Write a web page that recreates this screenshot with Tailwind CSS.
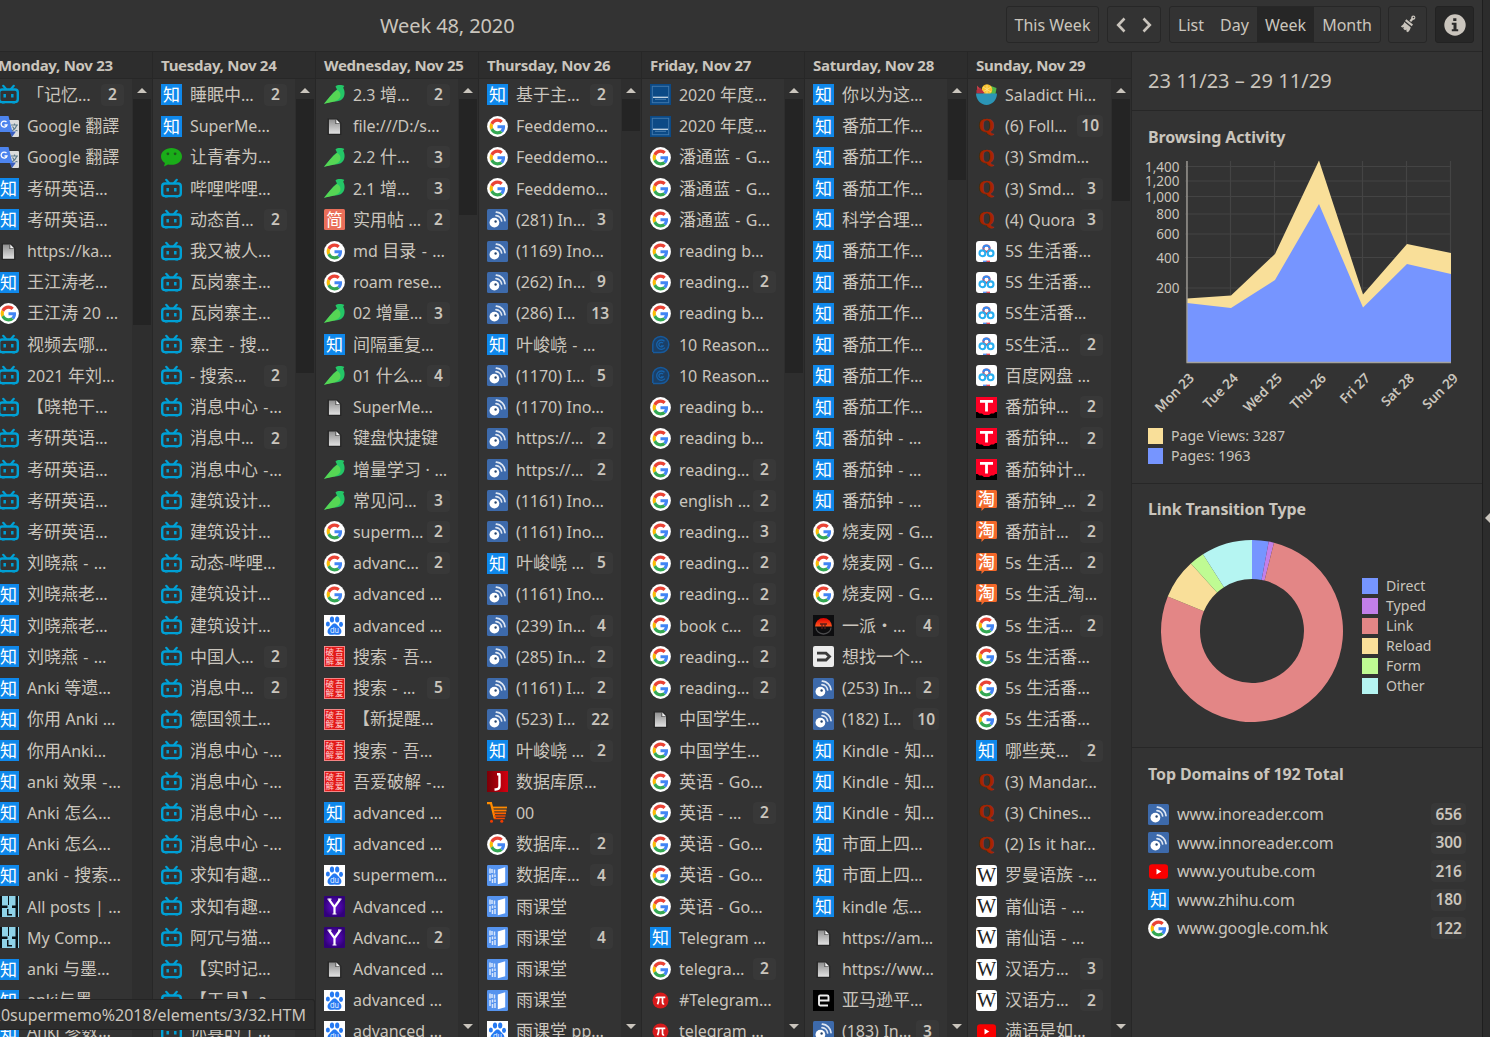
<!DOCTYPE html>
<html lang="en">
<head>
<meta charset="utf-8">
<title>History</title>
<script src="https://cdn.jsdelivr.net/npm/@tailwindcss/browser@4"></script>
</head>
<body class="h-[1037px] w-[1490px] overflow-hidden bg-[#333333] font-['Noto_Sans','Noto_Sans_CJK_SC',sans-serif] text-[16px] text-[#cac5bd]">
<svg class="absolute h-0 w-0" aria-hidden="true">
  <defs>
    <linearGradient id="gPage" x1="0" y1="0" x2="0" y2="1"><stop offset="0" stop-color="#8c8c8c"/><stop offset="1" stop-color="#e4e4e4"/></linearGradient>
    <linearGradient id="gJ" x1="0" y1="0" x2="1" y2="0"><stop offset="0" stop-color="#7a0008"/><stop offset="1" stop-color="#d4000f"/></linearGradient>
    <radialGradient id="gY"><stop offset="0" stop-color="#6a10d8"/><stop offset="1" stop-color="#32007c"/></radialGradient>
    <linearGradient id="gPai" x1="0" y1="0" x2="0" y2="1"><stop offset="0" stop-color="#e00000"/><stop offset="1" stop-color="#ff5a20"/></linearGradient>
  </defs>
  <symbol id="bili" viewBox="0 0 21 21"><rect x="1.2" y="5.500" width="18.600" height="12.600" rx="2.800" fill="none" stroke="#00a1d6" stroke-width="2.400"/><path d="M5.200 1.800 8 5M15.800 1.800 13 5" stroke="#00a1d6" stroke-width="2.200" stroke-linecap="round"/><path d="M6.700 10v3.600M14.300 10v3.600" stroke="#00a1d6" stroke-width="2.500"/><path d="M4 19.300h2.600M14.400 19.300H17" stroke="#0585b0" stroke-width="1"/></symbol>
  <symbol id="zhi" viewBox="0 0 21 21"><rect width="21" height="21" fill="#0f88eb"/><text x="10.500" y="16.500" text-anchor="middle" font-size="17" fill="#fff" font-weight="400" font-family="'Noto Sans CJK SC'">知</text></symbol>
  <symbol id="google" viewBox="0 0 21 21"><circle cx="10.500" cy="10.500" r="10.400" fill="#fff"/><g transform="translate(2.600 2.600) scale(.329)"><path fill="#EA4335" d="M24 9.500c3.540 0 6.710 1.220 9.210 3.600l6.850-6.850C35.900 2.380 30.470 0 24 0 14.620 0 6.510 5.380 2.560 13.220l7.980 6.190C12.430 13.720 17.740 9.500 24 9.500z"/><path fill="#4285F4" d="M46.980 24.550c0-1.570-.15-3.090-.38-4.550H24v9.020h12.940c-.58 2.960-2.260 5.480-4.780 7.180l7.730 6c4.510-4.180 7.090-10.360 7.090-17.650z"/><path fill="#FBBC05" d="M10.530 28.590c-.48-1.450-.76-2.990-.76-4.590s.27-3.140.76-4.590l-7.980-6.190C.92 16.460 0 20.120 0 24c0 3.880.92 7.540 2.560 10.780l7.970-6.190z"/><path fill="#34A853" d="M24 48c6.480 0 11.930-2.130 15.890-5.810l-7.730-6c-2.150 1.450-4.920 2.300-8.160 2.300-6.260 0-11.570-4.220-13.470-9.910l-7.980 6.190C6.510 42.620 14.620 48 24 48z"/></g></symbol>
  <symbol id="gtrans" viewBox="0 0 21 21"><path d="M9 4h11a1 1 0 0 1 1 1v15a1 1 0 0 1-1 1h-6z" fill="#dcdcdc"/><path d="M11.500 15.500 14 21l4-5.500z" fill="#3a5fc0"/><path d="M13 9h7M16.500 7.500V9M19 9q-1.500 4-5 6M14.500 10.500q1.500 3 5 4.500" stroke="#607d8b" stroke-width="1.200" fill="none"/><path d="M0 0h10.500l4 16H1a1 1 0 0 1-1-1z" fill="#4d84ee"/><path d="M8.500 6.200A3 3 0 1 0 9 9H6.500" fill="none" stroke="#fff" stroke-width="1.300"/></symbol>
  <symbol id="page" viewBox="0 0 21 21"><path d="M4.300 2.800h8.200l4.200 4.200v11.300H4.300z" fill="url(#gPage)" stroke="#242424" stroke-width="1.200"/><path d="M11.300 3v5h5z" fill="#555"/><path d="M12.300 3.600v3.600h3.600z" fill="#f2f2f2"/></symbol>
  <symbol id="wechat" viewBox="0 0 21 21"><path d="M10.500 1C4.700 1 0 4.600 0 9.500c0 2.900 1.600 5 3.900 6.600L3 19.500l4-2.100c1.100.3 2.300.4 3.500.4 5.800 0 10.500-3.600 10.500-8.300S16.300 1 10.500 1z" fill="#1aad19"/><circle cx="6.900" cy="6.800" r="1.400" fill="#1d5b1c"/><circle cx="14.100" cy="6.800" r="1.400" fill="#1d5b1c"/></symbol>
  <symbol id="yuque" viewBox="0 0 21 21"><path d="M11.500 2.500C13 .6 18 .7 20.300 2L19.200 3.800c1.800 3 2.200 8-1 11.200-3.800 3.800-9 1-18.200 4.800C3 16.500 8 9 13 5.500z" fill="#24c667"/><path d="M13 6c2.500 1 4.500 4 3 7.500-3.500 5-9 4.500-16 6.300C3.500 16 8 9.500 13 6z" fill="#56d654"/></symbol>
  <symbol id="jian" viewBox="0 0 21 21"><rect width="21" height="21" rx="1.500" fill="#ea6f5a"/><text x="10.500" y="16.500" text-anchor="middle" font-size="16.500" fill="#fff" font-weight="400" font-family="'Noto Sans CJK SC'">简</text></symbol>
  <symbol id="ino" viewBox="0 0 21 21"><rect width="21" height="21" rx="1.500" fill="#3d6aab"/><circle cx="7.400" cy="13.600" r="4.900" fill="#fff"/><circle cx="8.600" cy="12.500" r="1.200" fill="#27466f"/><path d="M9 6.600A6 6 0 0 1 14.600 12M9.400 3.200A9.200 9.200 0 0 1 18 11.600" fill="none" stroke="#dfe7f2" stroke-width="1.700" stroke-linecap="round"/></symbol>
  <symbol id="baidu" viewBox="0 0 21 21"><rect width="21" height="21" fill="#fff"/><g fill="#2579f2"><ellipse cx="3.900" cy="9" rx="2" ry="2.600"/><ellipse cx="8" cy="4.500" rx="2.100" ry="2.900"/><ellipse cx="13.200" cy="4.500" rx="2.100" ry="2.900"/><ellipse cx="17" cy="9.300" rx="2" ry="2.600"/><path d="M10.500 8.600c2.400 0 3.200 2.600 5.200 4.200 2.600 2.200 2.300 6.700-1.200 6.900-1.500.1-2.600-.3-4-.3s-2.500.4-4 .3c-3.500-.2-3.800-4.700-1.200-6.900 2-1.600 2.800-4.200 5.200-4.200z"/></g><text x="10.500" y="18" text-anchor="middle" font-size="7.500" fill="#e6f0ff" font-weight="400" font-family="Inter">du</text></symbol>
  <symbol id="wuai" viewBox="0 0 21 21"><rect width="21" height="21" fill="#e21a1a"/><rect x=".5" y=".5" width="20" height="20" fill="none" stroke="#f7a0a0" stroke-width=".8"/><g font-size="8.500" fill="#ffd0d0" font-weight="400" font-family="'Noto Sans CJK SC'"><text x="1.600" y="9.300">破</text><text x="11" y="9.300">吾</text><text x="1.600" y="18.300">解</text><text x="11" y="18.300">爱</text></g></symbol>
  <symbol id="yahoo" viewBox="0 0 21 21"><rect width="21" height="21" rx="1" fill="url(#gY)"/><path d="M5 3.500 10.500 11v7M16 3.500 10.500 11" stroke="#fff" stroke-width="2.200" fill="none"/><path d="M3.500 3.200h4M14 3.200h3.500M8.500 18h4" stroke="#fff" stroke-width="1.200"/></symbol>
  <symbol id="jbox" viewBox="0 0 21 21"><rect width="21" height="21" fill="url(#gJ)"/><path d="M12.500 2.500v12.300q0 3.700-3.800 3.700H7.500M10 3.300h3" stroke="#fff" stroke-width="2.400" fill="none"/></symbol>
  <symbol id="cart" viewBox="0 0 21 21"><path d="M0 1.200h4l3.800 15.200" stroke="#ff8c00" stroke-width="2.200" fill="none"/><path d="M5 5.500h15" stroke="#ff8a00" stroke-width="1.800"/><path d="M6 8.500h13.500" stroke="#ff7d00" stroke-width="1.800"/><path d="M6.500 11.300h12.500" stroke="#fb6300" stroke-width="1.800"/><path d="M7 14h11.500M7 16.500h10.800" stroke="#f24a00" stroke-width="1.500"/><circle cx="4.500" cy="19.300" r="1.500" fill="#f03c00"/><circle cx="14.800" cy="19.300" r="1.500" fill="#f03c00"/></symbol>
  <symbol id="yu" viewBox="0 0 21 21"><rect width="21" height="21" rx="1.200" fill="#5593ee"/><path d="M10.800 4.600 18.200 2.200v15l-7.400 2z" fill="#fff"/><path d="M3 3.500v5M5 4v4M7.500 4.500v4M3 10v6M5.500 9.500v3M5.500 14v4M8 9.500V12M8 13v5" stroke="#d9e7fc" stroke-width="1.500"/></symbol>
  <symbol id="kindle" viewBox="0 0 21 21"><rect width="21" height="21" fill="#0c4a86"/><rect x="2.300" y="2.300" width="16.400" height="16.400" fill="none" stroke="#3f76aa" stroke-width="1"/><path d="M3 13.300h15" stroke="#c9d8e6" stroke-width="1.300"/><path d="M5 15.300h11" stroke="#5b8dbb" stroke-width=".8"/></symbol>
  <symbol id="gblue" viewBox="0 0 21 21"><path d="M2.800 18V10.500a8 8 0 1 1 8 8H3" fill="#1b3f66" stroke="#175a9c" stroke-width="1.500"/><path d="M14.500 7.200a4.700 4.700 0 1 0 .5 6.500M13 9.200a2.300 2.300 0 1 0 0 2.800h-2" fill="none" stroke="#1763aa" stroke-width="1.300"/></symbol>
  <symbol id="pi" viewBox="0 0 21 21"><circle cx="10.500" cy="10.500" r="8" fill="#d71a1b"/><path d="M6 8.200q.5-.9 1.500-.9h7.800M8.800 7.500q0 4.500-1.300 6.700M12.500 7.500v4.700q0 2 1.700 1.800" stroke="#fff" stroke-width="1.700" fill="none"/></symbol>
  <symbol id="pai" viewBox="0 0 21 21"><rect width="21" height="21" fill="#0d0d0f"/><path d="M2 11.500a8.500 8.500 0 0 1 17 0z" fill="url(#gPai)"/><path d="M3 12.500a7.500 6.500 0 0 0 15 0" fill="none" stroke="#4a4a4c" stroke-width="1.300"/><path d="M7 9h7M9 9v5M12 9v5" stroke="#5a1c18" stroke-width="1.300" fill="none"/></symbol>
  <symbol id="dd" viewBox="0 0 21 21"><rect width="21" height="21" rx="2" fill="#ececec"/><path d="M4 7.200h9l3.500 3.400L13 14H4" stroke="#3a3a3a" stroke-width="2.800" fill="none"/></symbol>
  <symbol id="eb" viewBox="0 0 21 21"><rect width="21" height="21" fill="#000"/><path d="M6 10.500h9.500V6.700q0-1.200-1.200-1.200H7.200Q6 5.500 6 6.700v7.600q0 1.200 1.200 1.200H15" stroke="#ececec" stroke-width="1.900" fill="none"/></symbol>
  <symbol id="salad" viewBox="0 0 21 21"><path d="M1 1.500 8 9H1.500z" fill="#d8434a"/><path d="M15 2l5.500 2-1 6h-6z" fill="#53b64b"/><circle cx="11" cy="5.500" r="5.300" fill="#f9c22e"/><path d="M11 1v9M7 3l8 5M15 3 7 8" stroke="#fde28a" stroke-width=".8"/><path d="M.500 6l3.500-2.500 5 6H.500z" fill="#b5303f"/><path d="M0 9.500h21C21 16 16 21 10.500 21S0 16 0 9.500z" fill="#2b95b6"/></symbol>
  <symbol id="quora" viewBox="0 0 21 21"><text x="10.500" y="16" text-anchor="middle" font-size="19" textLength="15.500" lengthAdjust="spacingAndGlyphs" fill="#a82400" stroke="#a82400" stroke-width=".5" font-weight="700" font-family="'Liberation Serif'">Q</text></symbol>
  <symbol id="pan" viewBox="0 0 21 21"><rect width="21" height="21" rx="3" fill="#fff"/><circle cx="10.500" cy="7.600" r="3.100" fill="none" stroke="#e8404e" stroke-width="2"/><path d="M7.400 7.600a3.100 3.100 0 0 1 6.200 0" fill="none" stroke="#2f8cf5" stroke-width="2"/><circle cx="6.400" cy="12.300" r="2.900" fill="none" stroke="#29aef0" stroke-width="2.100"/><circle cx="14.600" cy="12.300" r="2.900" fill="none" stroke="#29aef0" stroke-width="2.100"/><path d="M7 20.300h4" stroke="#4a8cf0" stroke-width="1.300"/><path d="M10.500 20.300h3.500" stroke="#e8404e" stroke-width="1.300"/></symbol>
  <symbol id="tt" viewBox="0 0 21 21"><rect width="21" height="21" fill="#000"/><path d="M0 0h21v15h-1.500l-2 1.500h-2.500l-2 1.500H8l-2-1.500H3.500L1.500 15H0z" fill="#ff0025"/><path d="M4 4.300h13M10.500 4v10.500" stroke="#fff" stroke-width="2.800"/></symbol>
  <symbol id="tao" viewBox="0 0 21 21"><path d="M1.500 0h18A1.500 1.500 0 0 1 21 1.500v15a1.500 1.500 0 0 1-1.500 1.500H8.500L5.500 21v-3h-4A1.500 1.500 0 0 1 0 16.500v-15A1.500 1.500 0 0 1 1.500 0z" fill="#f3682a"/><text x="10.500" y="15" text-anchor="middle" font-size="17" fill="#fff" font-weight="500" font-family="'Noto Sans CJK SC'">淘</text></symbol>
  <symbol id="wiki" viewBox="0 0 21 21"><rect width="21" height="21" rx="3" fill="#fff"/><text x="10.500" y="17" text-anchor="middle" font-size="20" textLength="19.500" lengthAdjust="spacingAndGlyphs" fill="#222" font-family="'Liberation Serif'">W</text></symbol>
  <symbol id="yt" viewBox="0 0 21 21"><rect x="1" y="3.300" width="19" height="14.500" rx="3.300" fill="#f80000"/><path d="M8.500 7.800v5.600l4.800-2.800z" fill="#fff"/></symbol>
  <symbol id="hh" viewBox="0 0 21 21"><rect width="21" height="21" fill="#8fd3e8"/><path d="M0 0h4v21H0zM17.500 0H20v21h-2.500z" fill="#0a1216"/><path d="M4 9.500h5.500V12H4zM14 9.500h4V12h-4zM10 0h1v9h-1zM9 13h1.500v5H14v1.500H9z" fill="#0a1216"/></symbol>
</svg>

<div class="flex h-full">
  <div class="flex h-full w-[1482px] flex-col">
    <header class="flex h-[51px] shrink-0 items-start pt-[6px]">
      <h1 class="flex h-[39px] w-[1006px] items-center pl-[380px] text-[20px]"><span class="tracking-[-0.100px]">Week 48, 2020</span></h1>
      <div class="flex h-[37px] w-[93px] items-center justify-center rounded-[3px] border border-[#272727]">This Week</div>
      <div class="ml-2 flex h-[37px] w-[54px] items-center justify-between rounded-[3px] border border-[#272727] px-[8px]">
        <svg class="h-4 w-[10px]" viewBox="0 0 10 16"><path d="M8.500 1.500 2.200 8l6.300 6.500" fill="none" stroke="#cac5bd" stroke-width="2.600"/></svg>
        <svg class="h-4 w-[10px]" viewBox="0 0 10 16"><path d="M1.500 1.500 7.800 8l-6.300 6.500" fill="none" stroke="#cac5bd" stroke-width="2.600"/></svg>
      </div>
      <div class="ml-2 flex h-[37px] w-[212px] rounded-[3px] border border-[#272727]">
        <div class="flex w-[42px] items-center justify-center">List</div>
        <div class="flex w-[45px] items-center justify-center">Day</div>
        <div class="flex w-[57px] items-center justify-center bg-[#262626]">Week</div>
        <div class="flex flex-1 items-center justify-center">Month</div>
      </div>
      <div class="ml-[7px] flex h-[37px] w-[39px] items-center justify-center rounded-[3px] border border-[#272727]">
        <svg class="-mt-px h-[18px] w-[18px]" viewBox="0 0 18 18" fill="#cac5bd"><path d="M11.300 6.300 14 3.200" stroke="#cac5bd" stroke-width="2.200"/><circle cx="14.300" cy="2.700" r="2.100"/><circle cx="14.500" cy="2.500" r=".8" fill="#333"/><path d="M7.300 4.200 14 9.600l-1.300 1.700L6 5.900z"/><path d="M5.300 7 11.700 12.200C11.500 14 10.300 16 8.800 17.300L7.300 16.200l.3-1.600-1.600.7-1.800-1.500.9-1.500-2 .3L1.800 11.200C3.600 10.500 4.800 9 5.300 7z"/></svg>
      </div>
      <div class="ml-2 flex h-[37px] w-[39px] items-center justify-center rounded-[3px] border border-[#222222] bg-[#272727]">
        <svg class="h-[22px] w-[22px]" viewBox="0 0 22 22"><circle cx="11" cy="11" r="10.700" fill="#cac5bd"/><path d="M9.200 4.200h3.200v2.700H9.200zM7.800 8.800h4.700v6.500h1.700v1.900H7.800v-1.900h1.700v-4.600H7.800z" fill="#2b2b2b"/></svg>
      </div>
    </header>

    <div class="flex min-h-0 flex-1 border-t border-[#272727]">
      <main id="week" class="-ml-[10px] flex h-full w-[1142px] shrink-0 bg-[#2d2d2d]"></main>
      <aside class="flex h-full flex-1 flex-col">
        <div class="flex h-[59px] items-center border-b border-[#272727] pl-4 text-[20px]"><span class="tracking-[0.040px]">23 11/23 – 29 11/29</span></div>
        <section class="h-[373px] border-b border-[#272727] pt-[14px]">
          <h2 class="pl-4 text-[16px] leading-6 font-bold tracking-[-0.120px]">Browsing Activity</h2>
          <svg id="activity" class="block h-[272px] w-[350px]" viewBox="1132 149 350 272" fill="#cac5bd" font-size="13.500"></svg>
          <ul class="mt-[5px] pl-4 text-[14.100px]">
            <li class="flex h-5 items-center gap-2"><i class="h-4 w-[15px] bg-[#f9df99]"></i>Page Views: 3287</li>
            <li class="flex h-5 items-center gap-2"><i class="h-4 w-[15px] bg-[#7695ff]"></i>Pages: 1963</li>
          </ul>
        </section>
        <section class="h-[264px] border-b border-[#272727] pt-[13px]">
          <h2 class="pl-4 text-[16px] leading-6 font-bold tracking-[-0.120px]">Link Transition Type</h2>
          <div class="mt-[18px] flex items-center pl-[28px]">
            <svg id="donut" class="h-[184px] w-[184px]" viewBox="-92 -92 184 184"></svg>
            <ul id="legend" class="mt-[9px] ml-[18px] text-[14.100px]"></ul>
          </div>
        </section>
        <section class="pt-[14px] pr-4 pl-4">
          <h2 class="text-[16px] leading-6 font-bold tracking-[-0.100px]">Top Domains of 192 Total</h2>
          <ul id="domains" class="mt-[14px]"></ul>
        </section>
      </aside>
    </div>
  </div>
  <div class="flex h-full w-2 items-start justify-end border-l border-[#1e1e1e] bg-[#2c2c2c] pt-[513px]">
    <svg class="h-[10px] w-[5px]" viewBox="0 0 5 10"><path d="M5 0v10L0 5z" fill="#cac5bd"/></svg>
  </div>
</div>

<div class="absolute top-[999px] left-0 flex h-[31px] w-[315px] items-center justify-end overflow-hidden rounded-tr-[3px] border-t border-r border-b border-[#242424] bg-[#2d2d2d] pr-[8px] whitespace-nowrap"><span>%20supermemo%2018/elements/3/32.HTM</span></div>

<script>
const days = [
 ['Monday, Nov 23', 226, `bili|「记忆…|2
gtrans|Google 翻譯
gtrans|Google 翻譯
zhi|考研英语…
zhi|考研英语…
page|https://ka…
zhi|王江涛老…
google|王江涛 20 …
bili|视频去哪…
bili|2021 年刘…
bili|【晓艳干…
bili|考研英语…
bili|考研英语…
bili|考研英语…
bili|考研英语…
bili|刘晓燕 - …
zhi|刘晓燕老…
zhi|刘晓燕老…
zhi|刘晓燕 - …
zhi|Anki 等遗…
zhi|你用 Anki …
zhi|你用Anki…
zhi|anki 效果 -…
zhi|Anki 怎么…
zhi|Anki 怎么…
zhi|anki - 搜索…
hh|All posts | …
hh|My Comp…
zhi|anki 与墨…
zhi|anki与墨…
zhi|Anki 参数…`],
 ['Tuesday, Nov 24', 274, `zhi|睡眠中…|2
zhi|SuperMe…
wechat|让青春为…
bili|哔哩哔哩…
bili|动态首…|2
bili|我又被人…
bili|瓦岗寨主…
bili|瓦岗寨主…
bili|寨主 - 搜…
bili|- 搜索…|2
bili|消息中心 -…
bili|消息中…|2
bili|消息中心 -…
bili|建筑设计…
bili|建筑设计…
bili|动态-哔哩…
bili|建筑设计…
bili|建筑设计…
bili|中国人…|2
bili|消息中…|2
bili|德国领土…
bili|消息中心 -…
bili|消息中心 -…
bili|消息中心 -…
bili|消息中心 -…
bili|求知有趣…
bili|求知有趣…
bili|阿冗与猫…
bili|【实时记…
bili|【工具】a…
bili|你真的了…`],
 ['Wednesday, Nov 25', 116, `yuque|2.3 增…|2
page|file:///D:/s…
yuque|2.2 什…|3
yuque|2.1 增…|3
jian|实用帖 …|2
google|md 目录 - …
google|roam rese…
yuque|02 增量…|3
zhi|间隔重复…
yuque|01 什么…|4
page|SuperMe…
page|键盘快捷键
yuque|增量学习 · …
yuque|常见问…|3
google|superm…|2
google|advanc…|2
google|advanced …
baidu|advanced …
wuai|搜索 - 吾…
wuai|搜索 - …|5
wuai|【新提醒…
wuai|搜索 - 吾…
wuai|吾爱破解 -…
zhi|advanced …
zhi|advanced …
baidu|supermem…
yahoo|Advanced …
yahoo|Advanc…|2
page|Advanced …
baidu|advanced …
baidu|advanced …`],
 ['Thursday, Nov 26', 32, `zhi|基于主…|2
google|Feeddemo…
google|Feeddemo…
google|Feeddemo…
ino|(281) In…|3
ino|(1169) Ino…
ino|(262) In…|9
ino|(286) I…|13
zhi|叶峻峣 - …
ino|(1170) I…|5
ino|(1170) Ino…
ino|https://…|2
ino|https://…|2
ino|(1161) Ino…
ino|(1161) Ino…
zhi|叶峻峣 …|5
ino|(1161) Ino…
ino|(239) In…|4
ino|(285) In…|2
ino|(1161) I…|2
ino|(523) I…|22
zhi|叶峻峣 …|2
jbox|数据库原…
cart|00
google|数据库…|2
yu|数据库…|4
yu|雨课堂
yu|雨课堂|4
yu|雨课堂
yu|雨课堂
baidu|雨课堂 pp…`],
 ['Friday, Nov 27', 274, `kindle|2020 年度…
kindle|2020 年度…
google|潘通蓝 - G…
google|潘通蓝 - G…
google|潘通蓝 - G…
google|reading b…
google|reading…|2
google|reading b…
gblue|10 Reason…
gblue|10 Reason…
google|reading b…
google|reading b…
google|reading…|2
google|english …|2
google|reading…|3
google|reading…|2
google|reading…|2
google|book c…|2
google|reading…|2
google|reading…|2
page|中国学生…
google|中国学生…
google|英语 - Go…
google|英语 - …|2
google|英语 - Go…
google|英语 - Go…
google|英语 - Go…
zhi|Telegram …
google|telegra…|2
pi|#Telegram…
pi|telegram …`],
 ['Saturday, Nov 28', 81, `zhi|你以为这…
zhi|番茄工作…
zhi|番茄工作…
zhi|番茄工作…
zhi|科学合理…
zhi|番茄工作…
zhi|番茄工作…
zhi|番茄工作…
zhi|番茄工作…
zhi|番茄工作…
zhi|番茄工作…
zhi|番茄钟 - …
zhi|番茄钟 - …
zhi|番茄钟 - …
google|烧麦网 - G…
google|烧麦网 - G…
google|烧麦网 - G…
pai|一派・…|4
dd|想找一个…
ino|(253) In…|2
ino|(182) I…|10
zhi|Kindle - 知…
zhi|Kindle - 知…
zhi|Kindle - 知…
zhi|市面上四…
zhi|市面上四…
zhi|kindle 怎…
page|https://am…
page|https://ww…
eb|亚马逊平…
ino|(183) In…|3`],
 ['Sunday, Nov 29', 102, `salad|Saladict Hi…
quora|(6) Foll…|10
quora|(3) Smdm…
quora|(3) Smd…|3
quora|(4) Quora|3
pan|5S 生活番…
pan|5S 生活番…
pan|5S生活番…
pan|5S生活…|2
pan|百度网盘 …
tt|番茄钟…|2
tt|番茄钟…|2
tt|番茄钟计…
tao|番茄钟_…|2
tao|番茄計…|2
tao|5s 生活…|2
tao|5s 生活_淘…
google|5s 生活…|2
google|5s 生活番…
google|5s 生活番…
google|5s 生活番…
zhi|哪些英…|2
quora|(3) Mandar…
quora|(3) Chines…
quora|(2) Is it har…
wiki|罗曼语族 -…
wiki|莆仙语 - …
wiki|莆仙语 - …
wiki|汉语方…|3
wiki|汉语方…|2
yt|满语是如…`]
];
const esc = s => s.replace(/&/g, '&amp;').replace(/</g, '&lt;');
// CJK runs are set slightly larger than Latin ones; spaced hyphens get a little extra room
const mix = s => esc(s).replace(/[\u3000-\u9fff\uff00-\uffef]+| -/g, m => m === ' -'
  ? '<span class="tracking-[0.700px]"> -</span>'
  : `<span class="text-[17px] tracking-normal">${m}</span>`);
const icon = n => `<svg class="h-[21px] w-[21px] shrink-0"><use href="#${n}"/></svg>`;
const badge = n => `<b class="flex h-[22px] min-w-[23px] shrink-0 items-center justify-center rounded-[4px] bg-[#383838] px-1 text-[15.500px] leading-none font-semibold">${n}</b>`;

document.getElementById('week').innerHTML = days.map(([name, thumb, rows], i) => `
<div class="flex h-full ${i === 6 ? 'w-[164px]' : 'w-[163px]'} shrink-0 flex-col border-r border-[#272727]">
  <div class="flex h-[27px] shrink-0 items-center border-b border-[#272727] pl-2 text-[15px] font-bold tracking-[-0.280px] whitespace-nowrap">${name}</div>
  <div class="flex min-h-0 flex-1">
    <ul class="min-w-0 flex-1 overflow-hidden bg-[#333333] pt-[0.300px]">${rows.split('\n').map(r => {
      const p = r.split('|');
      const n = /^\d+$/.test(p[p.length - 1]) && p.length > 2 ? p.pop() : '';
      return `<li class="flex h-[31.220px] items-center pr-2 pl-2">${icon(p[0])}<span class="ml-2 min-w-0 flex-1 overflow-visible leading-[22px] tracking-[-0.050px] [word-spacing:0.500px] whitespace-pre">${mix(p.slice(1).join('|'))}</span>${n && badge(n)}</li>`;
    }).join('')}</ul>
    <div class="flex w-5 shrink-0 flex-col items-center bg-[#2e2e2e]">
      <svg class="mt-[9px] h-[5px] w-[10px] shrink-0" viewBox="0 0 10 5"><path d="M0 5 5 0l5 5z" fill="#cac5bd"/></svg>
      <div class="mt-[6px] w-[18px] shrink-0 bg-[#242424]" style="height:${thumb}px"></div>
      <svg class="mt-auto mb-[8px] h-[5px] w-[10px] shrink-0" viewBox="0 0 10 5"><path d="M0 0h10L5 5z" fill="#cac5bd"/></svg>
    </div>
  </div>
</div>`).join('');

const xs = [1187, 1231, 1275, 1319, 1363, 1407, 1451];
const views = [298.5, 295.5, 254, 160.5, 294.5, 244, 253], pages = [303, 308, 280, 204, 307.5, 264, 274];
const area = (v, c) => `<polygon fill="${c}" points="1187,362 ${v.map((y, i) => xs[i] + ',' + y).join(' ')} 1451,362"/>`;
const ticks = [['1,400', 166.5], ['1,200', 181], ['1,000', 196.5], ['800', 214], ['600', 234], ['400', 257.5], ['200', 288]];
document.getElementById('activity').innerHTML =
  ticks.map(([t, y]) => `<path d="M1185 ${y}H1451" stroke="#444" stroke-width="1.2"/><text x="1179.500" y="${y + 5}" text-anchor="end">${t}</text>`).join('') +
  xs.map(x => `<path d="M${x - .5} 161V362" stroke="#444" stroke-width="1.2"/>`).join('') +
  area(views, '#f9df99') + area(pages, '#7695ff') +
  `<path d="M1187 161V362.500H1451" stroke="#a5a29c" fill="none" stroke-width="1.300"/>` +
  ['Mon 23', 'Tue 24', 'Wed 25', 'Thu 26', 'Fri 27', 'Sat 28', 'Sun 29'].map((t, i) => `<text font-weight="600" font-size="13.600" text-anchor="end" transform="translate(${xs[i] + 8} 379) rotate(-45)">${t}</text>`).join('');

const parts = [['Direct', '#7695ff', 0, 10.6], ['Typed', '#c27fe8', 10.6, 14], ['Link', '#e38686', 14, 292.2], ['Reload', '#f9df99', 292.2, 317.8], ['Form', '#bffb93', 317.8, 327.4], ['Other', '#b5f5f2', 327.4, 360]];
const pt = (r, a) => (r * Math.sin(a * Math.PI / 180)).toFixed(2) + ' ' + (-r * Math.cos(a * Math.PI / 180)).toFixed(2);
document.getElementById('donut').innerHTML = parts.map(([, c, a, b]) => {
  const l = b - a > 180 ? 1 : 0;
  return `<path fill="${c}" d="M${pt(91, a)}A91 91 0 ${l} 1 ${pt(91, b)}L${pt(52, b)}A52 52 0 ${l} 0 ${pt(52, a)}z"/>`;
}).join('');
const sw = { Direct: 'bg-[#7695ff]', Typed: 'bg-[#c27fe8]', Link: 'bg-[#e38686]', Reload: 'bg-[#f9df99]', Form: 'bg-[#bffb93]', Other: 'bg-[#b5f5f2]' };
document.getElementById('legend').innerHTML = parts.map(([n]) => `<li class="flex h-5 items-center gap-2"><i class="h-4 w-4 ${sw[n]}"></i>${n}</li>`).join('');
document.getElementById('domains').innerHTML = [['ino', 'www.inoreader.com', 656], ['ino', 'www.innoreader.com', 300], ['yt', 'www.youtube.com', 216], ['zhi', 'www.zhihu.com', 180], ['google', 'www.google.com.hk', 122]]
  .map(([i, t, n]) => `<li class="flex h-[28.500px] items-center">${icon(i)}<span class="ml-2 flex-1 leading-[22px] tracking-[-0.120px]">${t}</span>${badge(n)}</li>`).join('');
</script>
</body>
</html>
